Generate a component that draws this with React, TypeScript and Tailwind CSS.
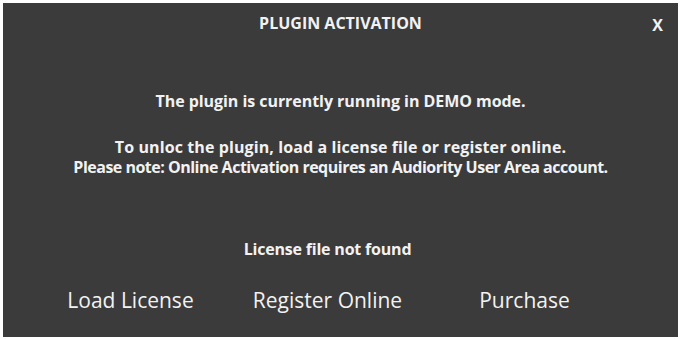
export default function App() {
  return (
    <div className="w-[681px] h-[339px] bg-white pt-[3px] pl-[3px] pr-[3px] pb-[2px]">
      <div
        className="relative h-full bg-[#3b3b3c] text-[#f2f2f2] flex flex-col items-center"
        style={{ fontFamily: '"Open Sans", "Noto Sans", sans-serif' }}
      >
        <div className="mt-[10px] text-[16px] font-bold leading-[20px] tracking-[0px]">PLUGIN ACTIVATION</div>
        <button className="absolute right-[15px] top-[12px] text-[16px] font-bold leading-[20px]">X</button>

        <div className="mt-[58px] text-[16px] font-bold leading-[20px] tracking-[-0.05px]">
          The plugin is currently running in DEMO mode.
        </div>
        <div className="mt-[26px] text-[16px] font-bold leading-[20px] text-center">
          <div className="tracking-[0.1px]">To unloc the plugin, load a license file or register online.</div>
          <div className="tracking-[-0.5px]">Please note: Online Activation requires an Audiority User Area account.</div>
        </div>

        {/* status + actions share one block, centred a bit left of the dialog */}
        <div className="mt-[62px] self-start ml-[29px] w-[591px] flex flex-col items-center">
          <div className="text-[16px] font-bold leading-[20px] tracking-[-0.2px]">License file not found</div>
          <div className="mt-[27px] grid grid-cols-[197px_197px_197px] text-[21px] font-medium leading-[28px] tracking-[0px]">
            <button className="text-center">Load License</button>
            <button className="text-center">Register Online</button>
            <button className="text-center">Purchase</button>
          </div>
        </div>
      </div>
    </div>
  );
}
